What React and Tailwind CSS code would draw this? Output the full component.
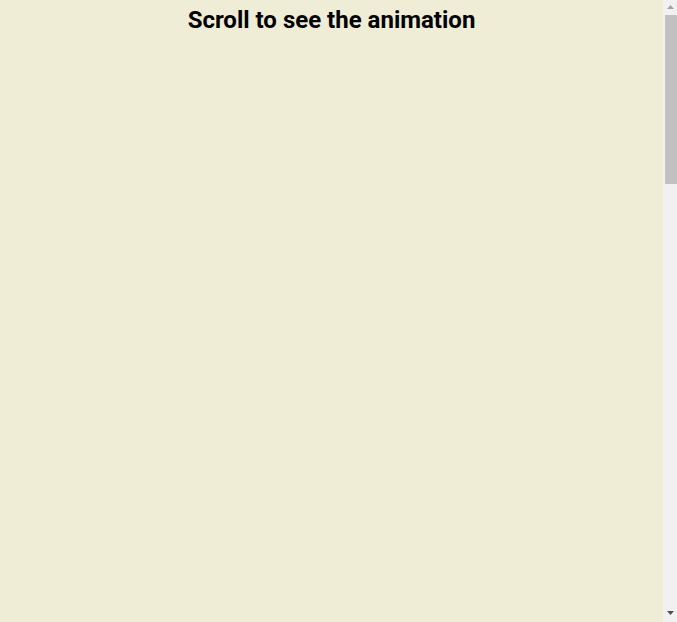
export default function App() {
  return (
    <div className="flex h-screen overflow-hidden bg-[#efedd6] font-['Roboto',sans-serif] text-black">
      <main className="flex-1">
        <h1 className="pt-1 text-center text-2xl font-bold">Scroll to see the animation</h1>
      </main>
      {/* page scrollbar, as it shows in the capture */}
      <div className="flex w-[14px] flex-col bg-[#f1f1f1]">
        <div className="flex h-[15px] items-start justify-center pt-[5px] pl-[1px]">
          <svg width="7" height="4" viewBox="0 0 7 4"><path d="M3.5 0L7 4H0z" fill="#a3a3a3" /></svg>
        </div>
        <div className="ml-[2px] h-[169px] bg-[#c1c1c1]" />
        <div className="flex-1" />
        <div className="flex h-[14px] items-start justify-center pt-[3px] pl-[1px]">
          <svg width="7" height="4" viewBox="0 0 7 4"><path d="M0 0H7L3.5 4z" fill="#505050" /></svg>
        </div>
      </div>
    </div>
  );
}
